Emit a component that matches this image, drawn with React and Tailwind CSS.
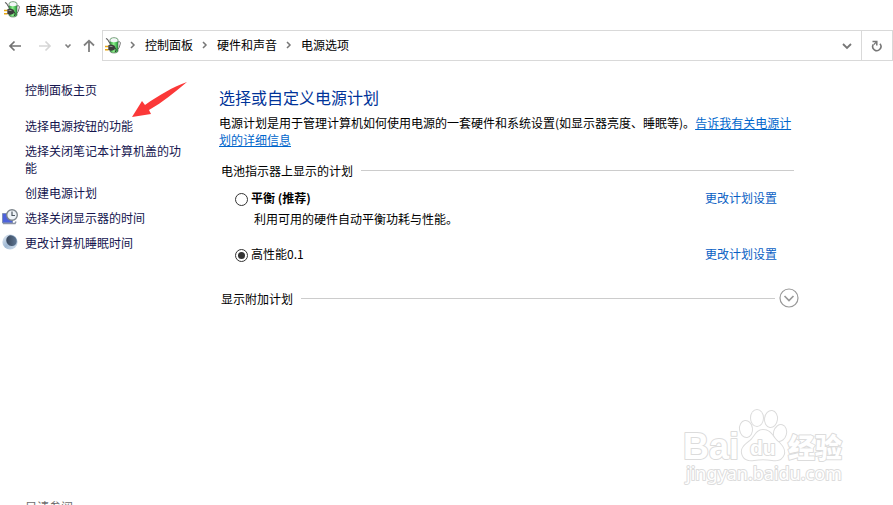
import { useState } from "react";

const crumbs = ["控制面板", "硬件和声音", "电源选项"];

const tasks = [
  { label: "选择电源按钮的功能" },
  { label: "选择关闭笔记本计算机盖的功能" },
  { label: "创建电源计划" },
  { label: "选择关闭显示器的时间", icon: DisplayClockIcon },
  { label: "更改计算机睡眠时间", icon: MoonIcon },
];

const plans = [
  {
    id: "balanced",
    name: "平衡 (推荐)",
    bold: true,
    description: "利用可用的硬件自动平衡功耗与性能。",
  },
  { id: "performance", name: "高性能0.1" },
];

function PowerIcon() {
  return (
    <svg width="16" height="17" viewBox="0 0 16 17" className="shrink-0">
      <defs>
        <linearGradient id="battery" x1="0" x2="1" y1="0" y2="0">
          <stop offset="0" stopColor="#2f9a3c" />
          <stop offset="0.45" stopColor="#8ef08c" />
          <stop offset="1" stopColor="#1f9a35" />
        </linearGradient>
      </defs>
      <path d="M1 1.500l1.500.8L5 6.500" fill="none" stroke="#5a5a5a" strokeWidth="1.100" />
      <path d="M13 5c2.200-1 2.600.5 2.200 2l-1 3.500-1.700 2" fill="none" stroke="#777" strokeWidth="1" />
      <path
        d="M5 3c0-3 8-3 8 0v11c0 2.600-8 2.600-8 0z"
        fill="url(#battery)"
        stroke="#4f6b52"
        strokeWidth="0.700"
      />
      <path d="M5.300 3c0-2.500 7.400-2.500 7.400 0v1.500c-2 .9-5.400.9-7.400 0z" fill="#f4f6f8" />
      <path d="M0 9.500h3.500M0 12.800h3.500" stroke="#e8a814" strokeWidth="1.600" />
      <path d="M3.300 8.200l3-.6 3 1 1.200 1.900-1.400 2.400-2.800.9-3-.7z" fill="#3c3c3c" />
      <path d="M4.500 9.300l3 .3" stroke="#9a9a9a" strokeWidth="0.900" />
      <path d="M10 11.200c1.500.3 1.300 2.300.3 3.800" fill="none" stroke="#333" strokeWidth="1" />
    </svg>
  );
}

function DisplayClockIcon() {
  return (
    <svg width="16" height="16" viewBox="0 0 16 16">
      <path d="M.5 4.500h10v9.500H.5z" fill="#4d62dc" stroke="#7e8fb8" />
      <path d="M1 14.500h12l1-2" fill="none" stroke="#8b93a6" strokeWidth="1.500" />
      <circle cx="10" cy="6" r="5.300" fill="#eef3f8" stroke="#7d858c" strokeWidth="1.400" />
      <path d="M10 2.500V6.500h3" fill="none" stroke="#4e5962" strokeWidth="1.200" />
    </svg>
  );
}

function MoonIcon() {
  return (
    <svg width="16" height="16" viewBox="0 0 16 16">
      <defs>
        <linearGradient id="moon" x1="0" x2="1" y1="0" y2="1">
          <stop offset="0" stopColor="#e6edf4" />
          <stop offset="0.5" stopColor="#9fb8d3" />
          <stop offset="1" stopColor="#dbe6f1" />
        </linearGradient>
        <linearGradient id="night" x1="0" x2="1" y1="0" y2="1">
          <stop offset="0" stopColor="#303c4e" />
          <stop offset="1" stopColor="#6681a0" />
        </linearGradient>
      </defs>
      <circle cx="8" cy="8" r="7.600" fill="url(#moon)" />
      <ellipse cx="9.500" cy="6.700" rx="5" ry="5.600" transform="rotate(-40 9.5 6.7)" fill="url(#night)" />
    </svg>
  );
}

function Crumb({ label }) {
  return (
    <li className="flex items-center">
      <svg width="6" height="10" viewBox="0 0 6 10" className="mx-[9px]">
        <path d="M1 2l3 3-3 3" fill="none" stroke="#777" strokeWidth="1.500" />
      </svg>
      <a href="#">{label}</a>
    </li>
  );
}

function AddressBar() {
  return (
    <div className="flex h-[31px] items-stretch">
      <div className="flex w-[102px] shrink-0 items-center pl-2">
        <button aria-label="后退" className="mr-4">
          <svg width="14" height="14" viewBox="0 0 14 14">
            <path d="M13 7H2M6.500 2.500L2 7l4.500 4.500" fill="none" stroke="#737373" strokeWidth="1.700" />
          </svg>
        </button>
        <button aria-label="前进" className="mr-3" disabled>
          <svg width="14" height="14" viewBox="0 0 14 14">
            <path d="M1 7h11M7.500 2.500L12 7l-4.500 4.500" fill="none" stroke="#d6d6d6" strokeWidth="1.700" />
          </svg>
        </button>
        <button aria-label="最近浏览的位置" className="mr-2.5">
          <svg width="8" height="8" viewBox="0 0 8 8">
            <path d="M1.500 2.500L4 5l2.500-2.500" fill="none" stroke="#808080" strokeWidth="1.600" />
          </svg>
        </button>
        <button aria-label="上移">
          <svg width="14" height="14" viewBox="0 0 14 14">
            <path d="M7 13V2M2 6.500L7 1.700l5 4.800" fill="none" stroke="#808080" strokeWidth="1.800" />
          </svg>
        </button>
      </div>
      <nav className="flex min-w-0 flex-1 items-center border border-[#d9d9d9] pl-0.5">
        <PowerIcon />
        <ol className="flex flex-1 items-center pb-0.5 whitespace-nowrap">
          {crumbs.map((label) => (
            <Crumb key={label} label={label} />
          ))}
        </ol>
        <button aria-label="以前的位置" className="flex w-7 items-center justify-center">
          <svg width="10" height="8" viewBox="0 0 10 8">
            <path d="M1 2l4 4 4-4" fill="none" stroke="#777" strokeWidth="1.800" />
          </svg>
        </button>
        <button
          aria-label="刷新"
          className="flex w-[31px] items-center justify-center self-stretch border-l border-[#d9d9d9]"
        >
          <svg width="12" height="12" viewBox="0 0 12 12">
            <path d="M2.300 4.400a4.100 4.100 0 1 0 6.600-.6" fill="none" stroke="#777" strokeWidth="1.600" />
            <path d="M1.500 1.600h4.300v4" fill="none" stroke="#777" strokeWidth="1.500" />
            <path d="M5.500 1.800L2.800 4.600" fill="none" stroke="#777" strokeWidth="1.300" />
          </svg>
        </button>
      </nav>
    </div>
  );
}

function Sidebar() {
  return (
    <aside className="relative flex w-[219px] shrink-0 flex-col pt-5 pr-8 text-[#15154f]">
      <a href="#" className="mb-[19px] ml-[25px]">
        控制面板主页
      </a>
      <ul className="flex flex-col gap-2">
        {tasks.map(({ label, icon: Icon }) => (
          <li key={label} className="flex pl-0.5">
            <span className="mr-[7px] w-4 shrink-0">{Icon && <Icon />}</span>
            <a href="#">{label}</a>
          </li>
        ))}
      </ul>
      <p className="mt-auto -mb-2.5 ml-[25px] text-[#6d6d6d]">另请参阅</p>
      <svg
        width="56"
        height="38"
        viewBox="0 0 56 38"
        className="pointer-events-none absolute top-5 left-[132px]"
      >
        <path d="M0 36L10 20l3 4C27 14 41 6 55 1 43 11 31 21 17 29l2 4z" fill="#fb3838" />
      </svg>
    </aside>
  );
}

function PlanRow({ plan, checked, onSelect }) {
  return (
    <div className="flex items-start pl-4">
      <input
        type="radio"
        id={plan.id}
        name="plan"
        checked={checked}
        onChange={onSelect}
        className="mt-1 mr-[3px] grid size-[13px] shrink-0 appearance-none place-content-center rounded-full border border-[#333] bg-white before:size-[7px] before:rounded-full checked:before:bg-[#333]"
      />
      <div className="flex-1">
        <label htmlFor={plan.id} className={plan.bold ? "font-bold" : ""}>
          {plan.name}
        </label>
        {plan.description && <p className="mt-1 ml-[3px]">{plan.description}</p>}
      </div>
      <a href="#" className="mr-[17px] text-[#0a5fc4]">
        更改计划设置
      </a>
    </div>
  );
}

function Watermark() {
  return (
    <svg
      width="170"
      height="82"
      viewBox="0 0 170 82"
      className="pointer-events-none absolute right-[43px] bottom-[17px]"
      fill="#fff"
      stroke="#dcdcdc"
      strokeWidth="2"
      strokeLinejoin="round"
      paintOrder="stroke"
    >
      <text x="3" y="53" fontSize="36" fontWeight="700" fontFamily="Liberation Sans, sans-serif">
        Bai
      </text>
      <ellipse cx="66" cy="23" rx="6" ry="8" transform="rotate(-8 66 23)" />
      <ellipse cx="77" cy="12" rx="6" ry="8" />
      <ellipse cx="91" cy="13" rx="6" ry="8" transform="rotate(8 91 13)" />
      <ellipse cx="100" cy="27" rx="6" ry="8" transform="rotate(16 100 27)" />
      <path d="M83 24c8 0 9 6 14 11 5 4 8 8 7 13-2 6-7 7-12 6-6-1-12-1-18 0-6 1-11-1-12-7-1-5 3-8 8-12s6-11 13-11z" />
      <text x="70" y="49" fontSize="21" fontWeight="700" fontFamily="Liberation Sans, sans-serif">
        du
      </text>
      <text x="108" y="52" fontSize="27" fontWeight="900" fontFamily="Noto Sans CJK SC, sans-serif">
        经验
      </text>
      <text x="6" y="74" fontSize="18" fontWeight="400" fontFamily="Noto Sans, sans-serif">
        jingyan.baidu.com
      </text>
    </svg>
  );
}

export default function App() {
  const [selected, setSelected] = useState("performance");

  return (
    <div className="relative flex h-screen flex-col overflow-hidden bg-white font-['Noto_Sans_CJK_SC',sans-serif] text-[12px] leading-[17px] text-black">
      <header className="mb-3 flex h-[18px] items-center gap-[5px] pl-1">
        <PowerIcon />
        <span>电源选项</span>
      </header>
      <AddressBar />

      <div className="flex min-h-0 flex-1">
        <Sidebar />
        <main className="max-w-[580px] flex-1 pt-[26px]">
          <h1 className="mb-1.5 text-[16px] leading-[21px] text-[#003399]">选择或自定义电源计划</h1>
          <p className="pr-1">
            电源计划是用于管理计算机如何使用电源的一套硬件和系统设置(如显示器亮度、睡眠等)。
            <a href="#" className="text-[#0066cc] underline">
              告诉我有关电源计划的详细信息
            </a>
          </p>

          <section className="mt-3.5 mr-[5px] pl-0.5">
            <div className="flex items-center gap-2">
              <h2>电池指示器上显示的计划</h2>
              <hr className="flex-1 border-[#ccc]" />
            </div>
            <div className="mt-2.5 -ml-0.5 flex flex-col gap-[18px]">
              {plans.map((plan) => (
                <PlanRow
                  key={plan.id}
                  plan={plan}
                  checked={selected === plan.id}
                  onSelect={() => setSelected(plan.id)}
                />
              ))}
            </div>
          </section>

          <section className="mt-[26px] flex items-center gap-2 pl-0.5">
            <h2>显示附加计划</h2>
            <hr className="flex-1 border-[#ccc]" />
            <button aria-label="展开附加计划" className="-ml-1">
              <svg width="20" height="20" viewBox="0 0 20 20" fill="none" stroke="#999">
                <circle cx="10" cy="10" r="9" strokeWidth="1.200" />
                <path d="M5.500 8l4.500 4.500L14.500 8" strokeWidth="1.700" />
              </svg>
            </button>
          </section>
        </main>
      </div>
      <Watermark />
    </div>
  );
}
